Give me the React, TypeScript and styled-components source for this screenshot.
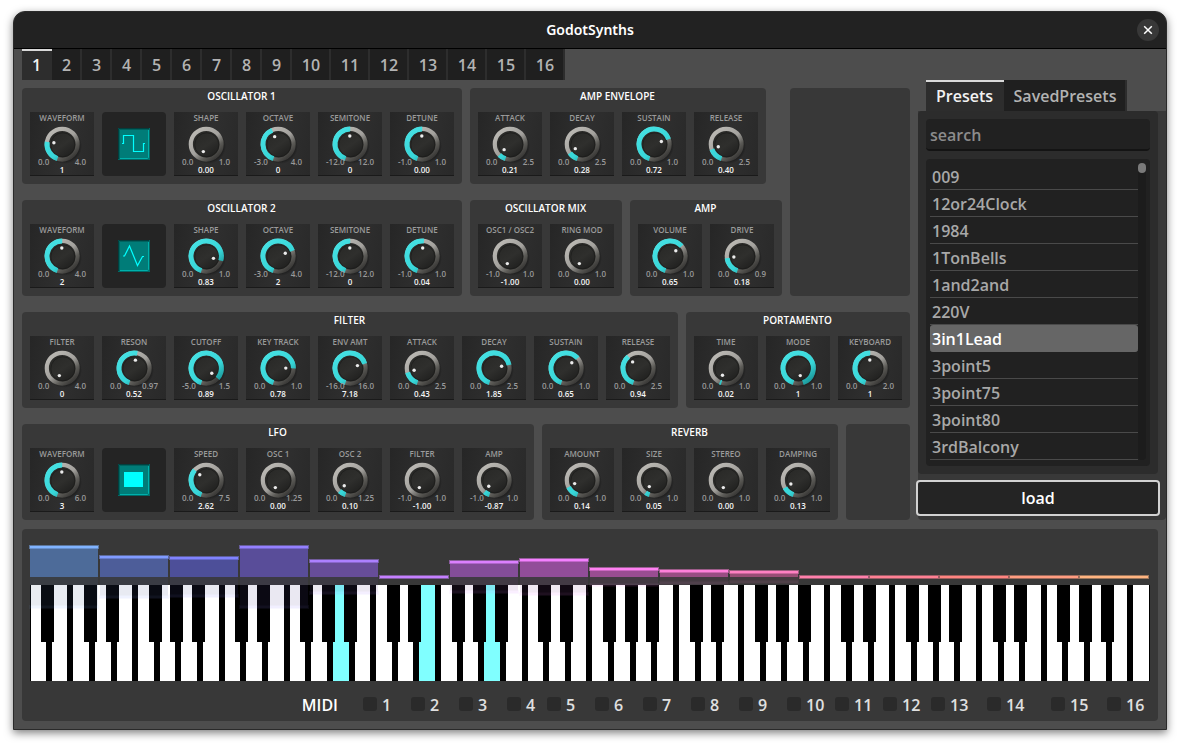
import React, { useState } from "react";
import styled, { createGlobalStyle } from "styled-components";

const GlobalStyle = createGlobalStyle`
  *, *::before { box-sizing: border-box; }
  body {
    margin: 0;
    background: #fff;
    font-family: "Open Sans", "Noto Sans", sans-serif;
    font-weight: 600;
    color: #fff;
  }
  button, input { font: inherit; color: inherit; margin: 0; }
`;

const AppWindow = styled.div`
  margin: 11px 13px 16px;
  border: 1px solid #2a2a2a;
  border-radius: 12px 12px 0 0;
  background: #4d4d4d;
  box-shadow: 0 3px 8px rgba(0, 0, 0, 0.5);
`;

const TitleBar = styled.header`
  display: grid;
  grid-template-columns: 36px 1fr 36px;
  align-items: center;
  height: 37px;
  border-bottom: 1px solid #000;
  border-radius: 11px 11px 0 0;
  background: #222;
`;

const WindowTitle = styled.h1`
  grid-column: 2;
  margin: 0;
  font: 600 14px/20px "Noto Sans", "Open Sans", sans-serif;
  text-align: center;
`;

const CloseButton = styled.button`
  display: grid;
  place-items: center;
  width: 22px;
  height: 22px;
  margin-left: 7px;
  padding: 0;
  border: 0;
  border-radius: 50%;
  background: #383838;
`;

const Body = styled.div`
  padding: 0 0 8px 8px;
`;

const ChannelTabs = styled.nav`
  display: flex;
  height: 31px;
`;

const Tab = styled.button<{ $active?: boolean; $width?: number }>`
  width: ${(p) => (p.$width ? `${p.$width}px` : "auto")};
  height: 31px;
  padding: ${(p) => (p.$active ? "0 9px 2px 8px" : "0 8px 0 9px")};
  border: 0 solid ${(p) => (p.$active ? "#d9d9d9" : "#2d2d2d")};
  border-width: ${(p) => (p.$active ? "2px 0 0" : "0 2px 0 0")};
  background: ${(p) => (p.$active ? "#2d2d2d" : "#1f1f1f")};
  color: ${(p) => (p.$active ? "#f2f2f2" : "#b3b3b3")};
  font-size: 16px;
  line-height: 24px;
  text-align: center;
`;

const Workspace = styled.div`
  display: flex;
  gap: 8px;
`;

const Modules = styled.main`
  display: flex;
  flex-direction: column;
  gap: 16px;
  padding-top: 8px;
`;

const ModuleRow = styled.div`
  display: flex;
  gap: 8px;
`;

const ModuleStack = styled.div`
  display: flex;
  flex-direction: column;
  gap: 16px;
  flex: 1;
`;

const Panel = styled.section`
  padding: 0 8px 8px;
  border-radius: 4px;
  background: #383838;
`;

const BlankPanel = styled.div<{ $width: number }>`
  width: ${(p) => p.$width}px;
  border-radius: 4px;
  background: #383838;
`;

const PanelTitle = styled.h2`
  height: 24px;
  margin: 0;
  padding-right: 1px;
  font-size: 10px;
  font-weight: 600;
  line-height: 16px;
  text-align: center;
`;

const Tiles = styled.div`
  display: flex;
  gap: 8px;
`;

const KnobTile = styled.label`
  position: relative;
  display: flex;
  flex-direction: column;
  align-items: center;
  width: 64px;
  height: 64px;
  border-bottom: 1px solid #1a1a1a;
  background: linear-gradient(100deg, #262626, #2f2f2f 55%, #292929);
  font-size: 8px;
  line-height: 8px;
`;

const KnobName = styled.span`
  height: 12px;
  color: #9a9a9a;
  line-height: 12px;
  white-space: nowrap;
`;

const Dial = styled.svg`
  display: block;
  flex: none;
  width: 40px;
  height: 40px;
`;

const KnobLimits = styled.span`
  position: relative;
  display: flex;
  justify-content: space-between;
  align-self: stretch;
  margin: -6px 8px 0;
  color: #999;
`;

const KnobValue = styled.output`
  position: relative;
  color: #f5f5f5;
`;

const KnobInput = styled.input`
  position: absolute;
  inset: 12px 12px auto;
  width: 40px;
  height: 40px;
  opacity: 0;
  cursor: pointer;
`;

const WaveTile = styled.div`
  display: grid;
  place-items: center;
  width: 64px;
  height: 64px;
  border-radius: 4px;
  background: #242424;
`;

const SidePanel = styled.aside`
  flex: 1;
  min-width: 0;
`;

const PresetTabs = styled.nav`
  display: flex;
  padding-left: 8px;
`;

const SideBacking = styled.div`
  padding: 0 8px 6px 0;
  border-radius: 0 0 4px 4px;
  background: #383838;
`;

const PresetPane = styled.div`
  display: flex;
  flex-direction: column;
  gap: 8px;
  padding: 8px;
  border-radius: 4px;
  background: #2c2c2c;
`;

const SearchInput = styled.input`
  width: 100%;
  height: 32px;
  padding: 2px 4px 0;
  border: 0;
  border-bottom: 2px solid #141414;
  border-radius: 4px;
  background: #212121;
  font-size: 16px;
  outline: none;
  &::placeholder { color: #8c8c8c; opacity: 1; }
`;

const PresetBox = styled.div`
  display: flex;
  padding: 4px 4px 6px;
  border-radius: 4px;
  background: #212121;
`;

const PresetList = styled.ul`
  flex: 1;
  margin: 0;
  padding: 0;
  list-style: none;
`;

const PresetItem = styled.button<{ $selected: boolean }>`
  display: block;
  width: 100%;
  height: 27px;
  padding: 2px 2px 0;
  border: 0;
  border-bottom: 1px solid ${(p) => (p.$selected ? "#666" : "#4a4a4a")};
  border-radius: ${(p) => (p.$selected ? "3px" : "0")};
  background: ${(p) => (p.$selected ? "#666" : "transparent")};
  color: ${(p) => (p.$selected ? "#fff" : "#a8a8a8")};
  font-size: 16px;
  line-height: 24px;
  text-align: left;
`;

const ScrollTrack = styled.div`
  width: 8px;
  border-radius: 4px;
  background: #1c1c1c;
`;

const ScrollThumb = styled.div`
  height: 10px;
  border-radius: 4px;
  background: #7a7a7a;
`;

const LoadButton = styled.button`
  display: block;
  width: 100%;
  height: 32px;
  margin-top: 8px;
  padding: 0;
  border: 0;
  border-radius: 2px;
  background: #242424;
  box-shadow: 0 0 0 2px #d2d2d2;
  font-size: 16px;
  line-height: 24px;
`;

const KeyboardPanel = styled.section`
  margin: 9px 8px 0 0;
  padding: 8px 8px 4px;
  border-radius: 4px;
  background: #383838;
`;

const Spectrum = styled.div`
  position: relative;
  z-index: 2;
  display: flex;
  align-items: flex-end;
  height: 40px;
  margin: 0 1px 0 -1px;
  pointer-events: none;
`;

const Band = styled.div`
  position: relative;
  flex: 1;
`;

const BandLevel = styled.div<{ $hue: number }>`
  position: relative;
  margin: 0 1px;
  background: hsl(${(p) => p.$hue}, 33%, 45%);
  &::before {
    content: "";
    position: absolute;
    inset: -2px -1px auto;
    height: 4px;
    border: 1px solid hsla(${(p) => p.$hue}, 100%, 75%, 0.5);
    background: hsl(${(p) => p.$hue}, 100%, 75%);
    background-clip: padding-box;
  }
`;

const BandReflection = styled.div`
  position: absolute;
  top: 100%;
  left: 0;
  right: 0;
  opacity: 0.12;
  transform: scaleY(-1);
`;

const Keyboard = styled.div`
  margin-top: 8px;
  border: 0 solid #000;
  border-width: 0 1px;
  overflow: hidden;
  background: #000;
`;

const Keys = styled.div`
  display: grid;
  grid-template-columns: repeat(52, 1fr);
  height: 96px;
  margin: 0 -3px 0 -4px;
`;

const KeySlot = styled.div`
  position: relative;
  border: 0 solid #000;
  border-width: 0 3px;
`;

const WhiteKey = styled.button<{ $pressed: boolean }>`
  display: block;
  width: 100%;
  height: 96px;
  padding: 0;
  border: 0;
  background: ${(p) => (p.$pressed ? "#80ffff" : "#fff")};
`;

const BlackKey = styled.button`
  position: absolute;
  z-index: 1;
  top: 0;
  left: -11px;
  width: 13px;
  height: 57px;
  padding: 0;
  border: 0;
  background: #000;
`;

const MidiRow = styled.div`
  display: flex;
  align-items: center;
  justify-content: flex-end;
  height: 24px;
  margin-top: 12px;
  font-size: 16px;
  line-height: 24px;
`;

const MidiTitle = styled.span`
  margin-right: 25px;
`;

const MidiChannel = styled.label<{ $width: number }>`
  display: flex;
  align-items: center;
  gap: 5px;
  width: ${(p) => p.$width}px;
  color: #e0e0e0;
`;

const MidiCheck = styled.input`
  appearance: none;
  width: 14px;
  height: 14px;
  margin-bottom: 2px;
  border-radius: 3px;
  background: #2a2a2a;
  &:checked { background: #40e0e0; }
`;

type KnobSpec = {
  name: string;
  min: string;
  max: string;
  value: string;
};

const CENTER = 20.2;
const RING = 15.2;

/* The sweep runs clockwise over 324 degrees, starting just left of the bottom. */
const pointAt = (ratio: number, radius: number) => {
  const angle = ((198 + 324 * ratio) * Math.PI) / 180;
  return [CENTER + radius * Math.sin(angle), CENTER - radius * Math.cos(angle)];
};

function DialDefs() {
  return (
    <svg width="0" height="0" style={{ position: "absolute" }} aria-hidden="true">
      <defs>
        <linearGradient id="ring" x1="0.15" y1="0.1" x2="0.85" y2="0.9">
          <stop offset="0" stopColor="#b9b7b2" />
          <stop offset="0.5" stopColor="#a3a19d" />
          <stop offset="0.78" stopColor="#5c5b57" />
          <stop offset="1" stopColor="#3c3b39" />
        </linearGradient>
        <linearGradient id="level" gradientUnits="userSpaceOnUse" x1="8" y1="4" x2="34" y2="36">
          <stop offset="0" stopColor="#46e2e4" />
          <stop offset="0.6" stopColor="#38d6d8" />
          <stop offset="1" stopColor="#148a8c" />
        </linearGradient>
        <linearGradient id="cap" x1="0" y1="0" x2="0.7" y2="1">
          <stop offset="0" stopColor="#262624" />
          <stop offset="0.6" stopColor="#2f2f2d" />
          <stop offset="1" stopColor="#1e1e1d" />
        </linearGradient>
        <radialGradient id="shade">
          <stop offset="0.7" stopColor="#000" stopOpacity="0.6" />
          <stop offset="1" stopColor="#000" stopOpacity="0" />
        </radialGradient>
      </defs>
    </svg>
  );
}

function Knob({ name, min, max, value }: KnobSpec) {
  const ratio = (Number(value) - Number(min)) / (Number(max) - Number(min));
  const [sx, sy] = pointAt(0, RING);
  const [ex, ey] = pointAt(ratio, RING);
  const [dx, dy] = pointAt(ratio, 8);
  return (
    <KnobTile>
      <KnobName>{name}</KnobName>
      <Dial viewBox="0 0 40 40" aria-hidden="true">
        <circle cx="22" cy="22" r="18" fill="url(#shade)" />
        <circle cx={CENTER} cy={CENTER} r={RING} fill="url(#cap)" />
        <circle cx={CENTER} cy={CENTER} r={RING + 0.2} fill="none" stroke="url(#ring)" strokeWidth="4.2" />
        <circle cx="20.8" cy="20.8" r="12" fill="none" stroke="#1b1b1a" strokeWidth="1" opacity="0.7" />
        {ratio > 0 && (
          <path
            d={`M${sx} ${sy}A${RING} ${RING} 0 ${ratio > 0.5556 ? 1 : 0} 1 ${ex} ${ey}`}
            fill="none"
            stroke="url(#level)"
            strokeWidth="5"
          />
        )}
        <circle cx={dx - 0.4} cy={dy - 0.2} r="1.7" fill="#ececec" />
      </Dial>
      <KnobLimits>
        <span>{min}</span>
        <span>{max}</span>
      </KnobLimits>
      <KnobValue>{value}</KnobValue>
      <KnobInput type="range" min={min} max={max} step="0.01" defaultValue={value} />
    </KnobTile>
  );
}

type Wave = "square" | "triangle" | "noise";

function WaveIcon({ wave }: { wave: Wave }) {
  return (
    <svg width="32" height="32" viewBox="0 0 32 32" role="img" aria-label={wave}>
      <rect width="32" height="32" fill="#007c78" />
      <path d="M0.5 32V0.5H31" fill="none" stroke="#023f3e" />
      <path d="M1.5 31V1.5H31" fill="none" stroke="#00635f" />
      <path d="M2 30.5H29.5L30.5 29.5V2" fill="none" stroke="#00b0ab" />
      <path d="M31.5 0V31.5H0" fill="none" stroke="#006a67" />
      {wave === "square" && (
        <path d="M4 15.5H5.5V7.5H15.5V23.5H25.5V15.5H27" fill="none" stroke="#00ffff" strokeWidth="1.2" />
      )}
      {wave === "triangle" && (
        <path d="M5 16H6.5L11.5 6L19.5 25.5L24.5 16.5H26" fill="none" stroke="#00ffff" strokeWidth="1.2" />
      )}
      {wave === "noise" && <rect x="6" y="8" width="19" height="15" fill="#00ffff" />}
    </svg>
  );
}

const knob = (name: string, min: string, max: string, value: string): KnobSpec => ({ name, min, max, value });

function Module({ title, knobs, wave }: { title: string; knobs: KnobSpec[]; wave?: Wave }) {
  return (
    <Panel>
      <PanelTitle>{title}</PanelTitle>
      <Tiles>
        {knobs.map((spec, i) => (
          <React.Fragment key={spec.name}>
            <Knob {...spec} />
            {wave && i === 0 && (
              <WaveTile>
                <WaveIcon wave={wave} />
              </WaveTile>
            )}
          </React.Fragment>
        ))}
      </Tiles>
    </Panel>
  );
}

const osc1 = [
  knob("WAVEFORM", "0.0", "4.0", "1"),
  knob("SHAPE", "0.0", "1.0", "0.00"),
  knob("OCTAVE", "-3.0", "4.0", "0"),
  knob("SEMITONE", "-12.0", "12.0", "0"),
  knob("DETUNE", "-1.0", "1.0", "0.00"),
];
const osc2 = [
  knob("WAVEFORM", "0.0", "4.0", "2"),
  knob("SHAPE", "0.0", "1.0", "0.83"),
  knob("OCTAVE", "-3.0", "4.0", "2"),
  knob("SEMITONE", "-12.0", "12.0", "0"),
  knob("DETUNE", "-1.0", "1.0", "0.04"),
];
const ampEnvelope = [
  knob("ATTACK", "0.0", "2.5", "0.21"),
  knob("DECAY", "0.0", "2.5", "0.28"),
  knob("SUSTAIN", "0.0", "1.0", "0.72"),
  knob("RELEASE", "0.0", "2.5", "0.40"),
];
const oscMix = [knob("OSC1 / OSC2", "-1.0", "1.0", "-1.00"), knob("RING MOD", "0.0", "1.0", "0.00")];
const amp = [knob("VOLUME", "0.0", "1.0", "0.65"), knob("DRIVE", "0.0", "0.9", "0.18")];
const filter = [
  knob("FILTER", "0.0", "4.0", "0"),
  knob("RESON", "0.0", "0.97", "0.52"),
  knob("CUTOFF", "-5.0", "1.5", "0.89"),
  knob("KEY TRACK", "0.0", "1.0", "0.78"),
  knob("ENV AMT", "-16.0", "16.0", "7.18"),
  knob("ATTACK", "0.0", "2.5", "0.43"),
  knob("DECAY", "0.0", "2.5", "1.85"),
  knob("SUSTAIN", "0.0", "1.0", "0.65"),
  knob("RELEASE", "0.0", "2.5", "0.94"),
];
const portamento = [
  knob("TIME", "0.0", "1.0", "0.02"),
  knob("MODE", "0.0", "1.0", "1"),
  knob("KEYBOARD", "0.0", "2.0", "1"),
];
const lfo = [
  knob("WAVEFORM", "0.0", "6.0", "3"),
  knob("SPEED", "0.0", "7.5", "2.62"),
  knob("OSC 1", "0.0", "1.25", "0.00"),
  knob("OSC 2", "0.0", "1.25", "0.10"),
  knob("FILTER", "-1.0", "1.0", "-1.00"),
  knob("AMP", "-1.0", "1.0", "-0.87"),
];
const reverb = [
  knob("AMOUNT", "0.0", "1.0", "0.14"),
  knob("SIZE", "0.0", "1.0", "0.05"),
  knob("STEREO", "0.0", "1.0", "0.00"),
  knob("DAMPING", "0.0", "1.0", "0.13"),
];

const presets = [
  "009",
  "12or24Clock",
  "1984",
  "1TonBells",
  "1and2and",
  "220V",
  "3in1Lead",
  "3point5",
  "3point75",
  "3point80",
  "3rdBalcony",
];

const bandLevels = [30, 20, 19, 30, 16, 0, 15, 17, 8, 6, 5, 0, 0, 0, 0, 0];
const pressedKeys = [14, 18, 21];
const midiWidths = [48, 48, 48, 40, 48, 48, 48, 48, 48, 48, 48, 48, 56, 64, 56, 43];

/* The keyboard starts on A; B-C and E-F have no black key between them. */
const hasBlackKey = (i: number) => i > 0 && i % 7 !== 2 && i % 7 !== 5;

const channels = Array.from({ length: 16 }, (_, i) => i + 1);

export default function App() {
  const [channel, setChannel] = useState(1);
  const [tab, setTab] = useState("Presets");
  const [selected, setSelected] = useState("3in1Lead");

  return (
    <>
      <GlobalStyle />
      <DialDefs />
      <AppWindow>
        <TitleBar>
          <WindowTitle>GodotSynths</WindowTitle>
          <CloseButton aria-label="Close">
            <svg width="10" height="10" viewBox="0 0 10 10" aria-hidden="true">
              <path d="M1.2 1.2L8.8 8.8M8.8 1.2L1.2 8.8" stroke="#fff" strokeWidth="1.5" />
            </svg>
          </CloseButton>
        </TitleBar>
        <Body>
          <ChannelTabs>
            {channels.map((n) => (
              <Tab key={n} $active={n === channel} $width={n < 10 ? 30 : 39} onClick={() => setChannel(n)}>
                {n}
              </Tab>
            ))}
          </ChannelTabs>
          <Workspace>
            <Modules>
              <ModuleRow>
                <ModuleStack>
                  <ModuleRow>
                    <Module title="OSCILLATOR 1" knobs={osc1} wave="square" />
                    <Module title="AMP ENVELOPE" knobs={ampEnvelope} />
                  </ModuleRow>
                  <ModuleRow>
                    <Module title="OSCILLATOR 2" knobs={osc2} wave="triangle" />
                    <Module title="OSCILLATOR MIX" knobs={oscMix} />
                    <Module title="AMP" knobs={amp} />
                  </ModuleRow>
                </ModuleStack>
                <BlankPanel $width={120} />
              </ModuleRow>
              <ModuleRow>
                <Module title="FILTER" knobs={filter} />
                <Module title="PORTAMENTO" knobs={portamento} />
              </ModuleRow>
              <ModuleRow>
                <Module title="LFO" knobs={lfo} wave="noise" />
                <Module title="REVERB" knobs={reverb} />
                <BlankPanel $width={64} />
              </ModuleRow>
            </Modules>
            <SidePanel>
              <PresetTabs>
                {["Presets", "SavedPresets"].map((name) => (
                  <Tab key={name} $active={name === tab} $width={name === "Presets" ? 78 : 123} onClick={() => setTab(name)}>
                    {name}
                  </Tab>
                ))}
              </PresetTabs>
              <SideBacking>
                <PresetPane>
                  <SearchInput type="text" placeholder="search" aria-label="search" />
                  <PresetBox>
                    <PresetList>
                      {presets.map((name) => (
                        <li key={name}>
                          <PresetItem $selected={name === selected} onClick={() => setSelected(name)}>
                            {name}
                          </PresetItem>
                        </li>
                      ))}
                    </PresetList>
                    <ScrollTrack>
                      <ScrollThumb />
                    </ScrollTrack>
                  </PresetBox>
                </PresetPane>
                <LoadButton>load</LoadButton>
              </SideBacking>
            </SidePanel>
          </Workspace>
          <KeyboardPanel>
            <Spectrum>
              {bandLevels.map((level, i) => {
                const hue = 216 + i * 11.25;
                return (
                  <Band key={i}>
                    <BandLevel $hue={hue} style={{ height: level }} />
                    {level > 0 && (
                      <BandReflection>
                        <BandLevel $hue={hue} style={{ height: level }} />
                      </BandReflection>
                    )}
                  </Band>
                );
              })}
            </Spectrum>
            <Keyboard>
              <Keys>
                {Array.from({ length: 52 }, (_, i) => (
                  <KeySlot key={i}>
                    <WhiteKey $pressed={pressedKeys.includes(i)} aria-label={`White key ${i + 1}`} />
                    {hasBlackKey(i) && <BlackKey aria-label={`Black key before ${i + 1}`} />}
                  </KeySlot>
                ))}
              </Keys>
            </Keyboard>
            <MidiRow>
              <MidiTitle>MIDI</MidiTitle>
              {channels.map((n) => (
                <MidiChannel key={n} $width={midiWidths[n - 1]}>
                  <MidiCheck type="checkbox" />
                  {n}
                </MidiChannel>
              ))}
            </MidiRow>
          </KeyboardPanel>
        </Body>
      </AppWindow>
    </>
  );
}
